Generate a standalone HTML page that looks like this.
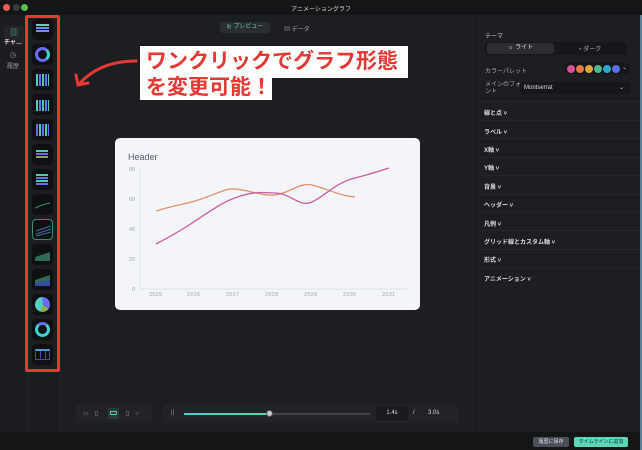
<!DOCTYPE html>
<html><head><meta charset="utf-8"><style>
*{margin:0;padding:0;box-sizing:border-box}
body{width:642px;height:450px;background:#1a1b1e;font-family:"Liberation Sans","Noto Sans CJK JP",sans-serif;position:relative;overflow:hidden;color:#ccc}
.abs{position:absolute}
.dot{width:7px;height:7px;border-radius:50%;top:4px}
.th{position:absolute;left:32px;width:21px;height:21px;background:#0f1012;border-radius:4px}
.row{position:absolute;left:484px;font-size:6px;font-weight:bold;color:#ddd}
.sep{position:absolute;left:480px;width:160px;height:1px;background:#26272b}
</style></head><body>
<div class="abs" style="left:0;top:0;width:642px;height:15px;background:#141517"></div>
<div class="abs dot" style="left:3px;background:#ee5b51"></div>
<div class="abs dot" style="left:13px;background:#3a3b3e"></div>
<div class="abs dot" style="left:21px;background:#55c145"></div>
<div class="abs" style="left:0;top:4px;width:642px;text-align:center;font-size:6px;color:#ddd">アニメーショングラフ</div>
<div class="abs" style="left:0;top:15px;width:28px;height:417px;background:#1c1d20"></div>
<div class="abs" style="left:28px;top:15px;width:28px;height:417px;background:#1c1d20;border-left:1px solid #26272b"></div>
<div class="abs" style="left:58px;top:15px;width:418px;height:417px;background:#1d1e22"></div>
<div class="abs" style="left:478px;top:15px;width:162px;height:417px;background:#1d1e22"></div>
<div class="abs" style="left:640px;top:15px;width:2px;height:435px;background:#5a7f97"></div>
<div class="abs" style="left:4px;top:26px;width:20px;height:20px;background:#232427;border-radius:3px"></div>
<div class="abs" style="left:10px;top:27px;font-size:8px;color:#5bc9a8">▥</div>
<div class="abs" style="left:4px;top:37px;font-size:6px;color:#ddd;font-weight:bold">チャ…</div>
<div class="abs" style="left:10px;top:51px;font-size:7px;color:#999">◷</div>
<div class="abs" style="left:7px;top:61px;font-size:6px;color:#999">履歴</div>
<div class="abs" style="left:25px;top:15px;width:35px;height:357px;border:3px solid #e53935;border-radius:2px"></div>
<div class="th" style="top:19px"><div class="abs" style="left:4px;top:5px;width:13px;height:2px;background:#5bd3b5;box-shadow:0 3px 0 #6a8cf0,0 6px 0 #9a7cf0"></div></div>
<div class="th" style="top:44px"><div class="abs" style="left:3px;top:3px;width:15px;height:15px;border-radius:50%;border:3px solid #6a6cf0;border-right-color:#3fd0d0"></div></div>
<div class="th" style="top:69px"><div class="abs" style="left:4px;top:5px;width:13px;height:12px;background:repeating-linear-gradient(90deg,#4fc9b0 0 2px,transparent 2px 3px,#6a6cf0 3px 5px,transparent 5px 6px)"></div></div>
<div class="th" style="top:94px"><div class="abs" style="left:4px;top:6px;width:13px;height:11px;background:repeating-linear-gradient(90deg,#4fc9b0 0 2px,transparent 2px 3px,#5a7cf0 3px 5px,transparent 5px 6px)"></div></div>
<div class="th" style="top:119px"><div class="abs" style="left:4px;top:5px;width:13px;height:12px;background:repeating-linear-gradient(90deg,#6a6cf0 0 2px,transparent 2px 3px,#4fc9b0 3px 5px,transparent 5px 6px)"></div></div>
<div class="th" style="top:144px"><div class="abs" style="left:4px;top:6px;width:12px;height:2px;background:#4fc9b0;box-shadow:0 3px 0 #6a6cf0,0 6px 0 #8a9c70"></div></div>
<div class="th" style="top:169px"><div class="abs" style="left:4px;top:5px;width:12px;height:2px;background:#4fc9b0;box-shadow:0 3px 0 #4a7cf0,0 6px 0 #4fc9b0,0 9px 0 #6a6cf0"></div></div>
<div class="th" style="top:194px"><svg width="21" height="21"><path d="M3 14 L10 11 L18 9" stroke="#3d8d6d" fill="none"/></svg></div>
<div class="th" style="top:219px;border:1px solid #3a8d75"><svg width="21" height="21"><path d="M3 11 L18 6 M3 14 L18 9 M3 16 L18 12" stroke="#4a6aa0" fill="none"/></svg></div>
<div class="th" style="top:244px"><svg width="21" height="21"><path d="M3 17 L3 13 L18 8 L18 17Z" fill="#2f6a55"/></svg></div>
<div class="th" style="top:269px"><svg width="21" height="21"><path d="M3 17 L3 11 L18 6 L18 17Z" fill="#2f6a55"/><path d="M3 17 L3 14 L18 11 L18 17Z" fill="#3a4aa0"/></svg></div>
<div class="th" style="top:294px"><div class="abs" style="left:3px;top:3px;width:15px;height:15px;border-radius:50%;background:conic-gradient(#6a6cf0 0 35%,#8ab04a 0 55%,#4fd0c0 0 100%)"></div></div>
<div class="th" style="top:319px"><div class="abs" style="left:3px;top:3px;width:15px;height:15px;border-radius:50%;border:3px solid #3fd0d0;border-top-color:#6a6cf0"></div></div>
<div class="th" style="top:344px"><div class="abs" style="left:3px;top:5px;width:15px;height:11px;border:1px solid #4a4aa0;border-top:2px solid #4a9ad0;background:repeating-linear-gradient(90deg,transparent 0 4px,#4a4aa0 4px 5px)"></div></div>
<div class="abs" style="left:220px;top:22px;width:50px;height:11px;background:#2b2e31;border-radius:3px;font-size:6px;color:#5bc9a8;text-align:center;line-height:11px">⊵ プレビュー</div>
<div class="abs" style="left:284px;top:24px;font-size:6px;color:#aaa">▤ データ</div>
<div class="abs" style="left:140px;top:46px;width:268px;height:32px;background:#fff"></div>
<div class="abs" style="left:140px;top:76px;width:132px;height:24px;background:#fff"></div>
<div class="abs" style="left:146px;top:49px;font-size:21px;font-weight:bold;color:#e53935;line-height:26px;white-space:nowrap">ワンクリックでグラフ形態</div>
<div class="abs" style="left:146px;top:75px;font-size:21px;font-weight:bold;color:#e53935;line-height:26px">を変更可能！</div>
<svg class="abs" style="left:70px;top:55px" width="70" height="35"><path d="M66 6 C45 6 25 12 10 28" stroke="#e53935" stroke-width="3" fill="none" stroke-linecap="round"/><path d="M6 20 L8 30 L18 28" stroke="#e53935" stroke-width="3" fill="none" stroke-linecap="round"/></svg>
<div class="abs" style="left:115px;top:138px;width:305px;height:172px;background:#f3f5f8;border-radius:5px"></div>
<div class="abs" style="left:128px;top:152px;font-size:9px;color:#555f6e">Header</div>
<svg class="abs" style="left:115px;top:138px" width="305" height="172" font-family="Liberation Sans" font-size="5.5" fill="#a0a6b0">
<line x1="25" y1="31" x2="25" y2="151" stroke="#dde2ea"/><line x1="25" y1="151" x2="293" y2="151" stroke="#dde2ea"/>
<text x="14" y="33">80</text><text x="14" y="63">60</text><text x="14" y="93">40</text><text x="14" y="123">20</text><text x="17" y="153">0</text>
<g letter-spacing="0.3"><text x="34" y="158">2025</text><text x="72" y="158">2026</text><text x="111" y="158">2027</text><text x="150" y="158">2028</text><text x="189" y="158">2029</text><text x="228" y="158">2030</text><text x="267" y="158">2031</text></g>
<path d="M41 73 C60 67 70 66 80 63 C100 57 110 50 120 51 C135 52 145 58 160 57 C175 55 185 44 197 47 C210 50 225 58 240 59" stroke="#e0906a" stroke-width="1.3" fill="none"/>
<path d="M41 106 C60 96 70 90 80 83 C100 70 110 63 120 60 C140 52 150 55 160 55 C175 55 185 70 197 64 C210 58 220 45 240 40 C255 36 265 33 274 30" stroke="#c95fa0" stroke-width="1.3" fill="none"/>
</svg>
<div class="abs" style="left:76px;top:405px;width:76px;height:18px;background:#222327;border-radius:3px"></div>
<div class="abs" style="left:83px;top:410px;font-size:6px;color:#999;letter-spacing:6px">▭▯</div>
<div class="abs" style="left:108px;top:408px;width:11px;height:11px;background:#2e3a38;border-radius:2px"></div>
<div class="abs" style="left:110px;top:411px;width:7px;height:4px;border:1px solid #5bc9a8;border-radius:1px"></div>
<div class="abs" style="left:126px;top:410px;font-size:6px;color:#999;letter-spacing:6px">▯○</div>
<div class="abs" style="left:163px;top:405px;width:296px;height:18px;background:#222327;border-radius:3px"></div>
<div class="abs" style="left:171px;top:410px;font-size:6px;color:#999">||</div>
<div class="abs" style="left:184px;top:413px;width:86px;height:2px;background:linear-gradient(90deg,#4fc9d0,#5bd8a8)"></div>
<div class="abs" style="left:270px;top:413px;width:100px;height:2px;background:#444"></div>
<div class="abs" style="left:266px;top:410px;width:7px;height:7px;border-radius:50%;background:#ccc;border:1px solid #555"></div>
<div class="abs" style="left:376px;top:406px;width:32px;height:15px;background:#1a1b1e;border-radius:2px;font-size:6px;color:#ddd;text-align:center;line-height:15px">1.4s</div>
<div class="abs" style="left:413px;top:410px;font-size:6px;color:#ccc">/</div>
<div class="abs" style="left:428px;top:410px;font-size:6px;color:#ddd">3.0s</div>
<div class="abs" style="left:0;top:432px;width:640px;height:18px;background:#141517"></div>
<div class="abs" style="left:533px;top:437px;width:36px;height:10px;background:#4a4f58;border-radius:2px;font-size:5px;color:#ddd;text-align:center;line-height:10px">履歴に保存</div>
<div class="abs" style="left:574px;top:437px;width:54px;height:10px;background:#5bd8b8;border-radius:2px;font-size:5px;color:#133;text-align:center;line-height:10px">タイムラインに追加</div>
<div class="abs" style="left:485px;top:31px;font-size:6px;color:#ccc">テーマ</div>
<div class="abs" style="left:485px;top:42px;width:142px;height:13px;background:#16171a;border-radius:3px"></div>
<div class="abs" style="left:487px;top:43px;width:67px;height:11px;background:#2b2d31;border-radius:3px;font-size:6px;color:#ddd;text-align:center;line-height:11px">☼ ライト</div>
<div class="abs" style="left:578px;top:44px;font-size:6px;color:#bbb">◔ ダーク</div>
<div class="abs" style="left:485px;top:66px;font-size:6px;color:#aaa">カラーパレット</div>
<div class="abs" style="left:565px;top:63px;width:65px;height:11px;background:#16171a;border-radius:3px"></div>
<div class="abs" style="left:567px;top:65px;display:flex;gap:1px">
<i style="width:8px;height:8px;border-radius:50%;background:#d9509a"></i><i style="width:8px;height:8px;border-radius:50%;background:#e87a40"></i><i style="width:8px;height:8px;border-radius:50%;background:#e0a83a"></i><i style="width:8px;height:8px;border-radius:50%;background:#4ab88a"></i><i style="width:8px;height:8px;border-radius:50%;background:#2aa8d0"></i><i style="width:8px;height:8px;border-radius:50%;background:#5a70e8"></i></div>
<div class="abs" style="left:622px;top:64px;font-size:6px;color:#bbb">⌄</div>
<div class="abs" style="left:485px;top:82px;font-size:6px;color:#aaa;line-height:7px">メインのフォ<br>ント</div>
<div class="abs" style="left:520px;top:82px;width:110px;height:12px;background:#16171a;border-radius:3px;font-size:6px;color:#ddd;line-height:12px;padding-left:4px">Montserrat<span style="position:absolute;right:6px">⌄</span></div>
<div class="sep" style="top:101px"></div>
<div class="row" style="top:108px">線と点 ˅</div><div class="sep" style="top:120px"></div>
<div class="row" style="top:127px">ラベル ˅</div><div class="sep" style="top:138px"></div>
<div class="row" style="top:145px">X軸 ˅</div><div class="sep" style="top:157px"></div>
<div class="row" style="top:163px">Y軸 ˅</div><div class="sep" style="top:175px"></div>
<div class="row" style="top:182px">背景 ˅</div><div class="sep" style="top:194px"></div>
<div class="row" style="top:200px">ヘッダー ˅</div><div class="sep" style="top:212px"></div>
<div class="row" style="top:219px">凡例 ˅</div><div class="sep" style="top:230px"></div>
<div class="row" style="top:237px">グリッド線とカスタム軸 ˅</div><div class="sep" style="top:249px"></div>
<div class="row" style="top:255px">形式 ˅</div><div class="sep" style="top:267px"></div>
<div class="row" style="top:274px">アニメーション ˅</div>
</body></html>
